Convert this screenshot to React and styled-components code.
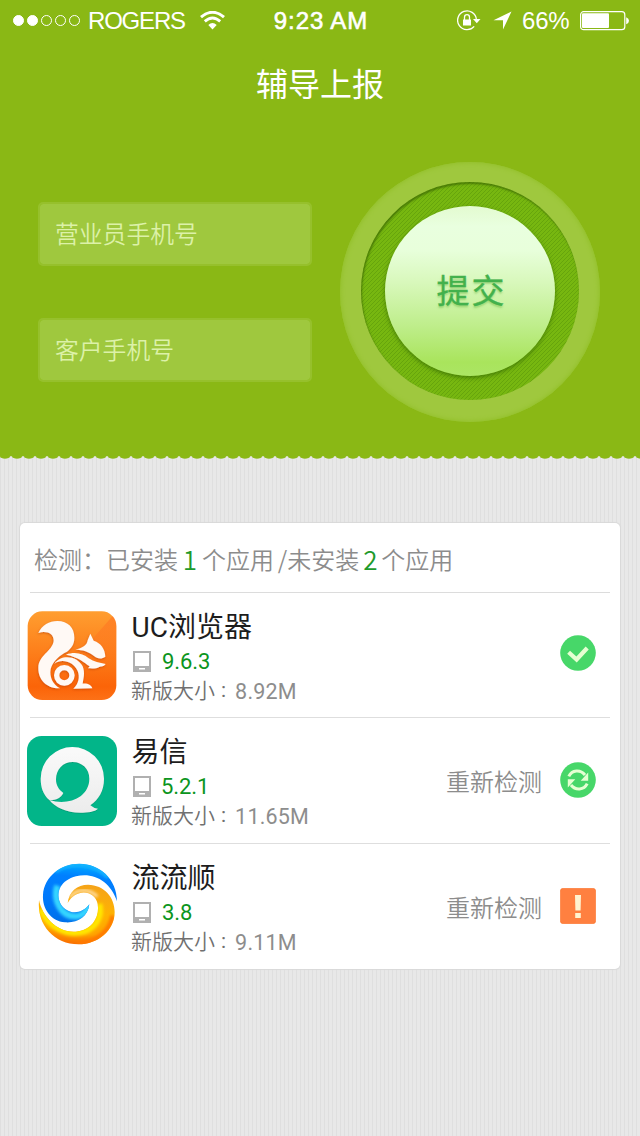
import React from "react";
import styled, { createGlobalStyle, css } from "styled-components";

const GlobalStyle = createGlobalStyle`
  * { box-sizing: border-box; }
  body {
    margin: 0;
    background: #e7e7e7 repeating-linear-gradient(90deg, #dfdfdf 0 1px, #e8e8e8 1px 4px);
    font-family: "Noto Sans CJK SC", sans-serif;
  }
`;

const Screen = styled.div`
  width: 640px;
  height: 1136px;
  overflow: hidden;
  display: flex;
  flex-direction: column;
`;

const Header = styled.header`
  height: 456px;
  flex: none;
  background: #8ab815;
`;

const StatusBar = styled.div`
  display: grid;
  grid-template-columns: 1fr auto 1fr;
  align-items: center;
  height: 40px;
  padding: 0 11px 0 13px;
  color: #fff;
  font: 24px/40px "Liberation Sans", sans-serif;
`;

const StatusGroup = styled.div`
  display: flex;
  align-items: center;
  height: 40px;
  justify-content: ${(p) => (p.$end ? "flex-end" : "flex-start")};
`;

const SignalDots = styled.div`
  display: flex;
  gap: 3px;
  margin-right: 8px;
`;

const Dot = styled.span`
  width: 11px;
  height: 11px;
  border-radius: 50%;
  border: 1px solid #fff;
  background: ${(p) => (p.$on ? "#fff" : "transparent")};
`;

const Carrier = styled.span`
  width: 112px;
  letter-spacing: -1.2px;
`;

const Clock = styled.span`
  padding-top: 1px;
  letter-spacing: 0.9px;
  -webkit-text-stroke: 0.6px #fff;
`;

const Percent = styled.span`
  margin: 0 10px 0 10px;
  padding-top: 1px;
  width: 48px;
  letter-spacing: -0.2px;
  white-space: nowrap;
`;

const Title = styled.h1`
  margin: 18px 0 0;
  height: 50px;
  font-size: 32px;
  font-weight: 400;
  line-height: 48px;
  text-align: center;
  color: #fff;
`;

const Form = styled.form`
  display: flex;
  justify-content: space-between;
  padding: 54px 40px 0 38px;
`;

const Fields = styled.div`
  display: flex;
  flex-direction: column;
  gap: 52px;
  padding-top: 40px;
`;

const Field = styled.input`
  width: 274px;
  height: 64px;
  padding: 0 15px 4px;
  border: 2px solid #96c02c;
  border-radius: 5px;
  outline: none;
  background: #9fc83e;
  background-clip: padding-box;
  font: 350 23.8px "Noto Sans CJK SC", sans-serif;
  color: #e0f3b0;
  &::placeholder { color: #dcf1a8; opacity: 1; }
`;

const Halo = styled.div`
  display: flex;
  justify-content: center;
  align-items: center;
  width: 260px;
  height: 260px;
  padding-bottom: 2px;
  border-radius: 50%;
  background: #9fc83e;
  box-shadow: inset 0 0 4px 1px #93c02a;
`;

const Groove = styled.div`
  display: flex;
  justify-content: center;
  align-items: center;
  width: 218px;
  height: 218px;
  border-radius: 50%;
  background: repeating-linear-gradient(135deg, #66a50c 0 1px, #77b710 1px 2.83px);
  box-shadow: inset 1px 2px 2px rgba(50, 90, 0, 0.6);
`;

const Submit = styled.button`
  width: 170px;
  height: 170px;
  padding: 0 0 5px 3px;
  border: 0;
  border-radius: 50%;
  background: linear-gradient(#e3fbd0 0%, #e9ffdf 12%, #e8ffdb 26%, #d8f8bb 45%, #bfee8c 70%, #a9e45c 92%, #abe564 100%);
  box-shadow: 0 2px 4px rgba(40, 90, 0, 0.6);
  font: 400 33px "Noto Sans CJK SC", sans-serif;
  letter-spacing: 2px;
  color: #43b14c;
  -webkit-text-stroke: 0.3px #43b14c;
  text-shadow: 0 2px 2px rgba(110, 190, 70, 0.5);
`;

const Scallop = styled.div`
  flex: none;
  height: 3px;
  background: radial-gradient(ellipse 6px 3px at 50% 0, #8ab815 75%, transparent 100%) -1px 0 / 12px 3px repeat-x;
`;

const Card = styled.main`
  margin: 64px 20px 0;
  height: 446px;
  padding: 0 10px;
  border-radius: 5px;
  background: #fff;
  box-shadow: 0 0 1px 1px #d9d9d9;
`;

const rule = css`
  border-bottom: 1px solid #dcdcdc;
`;

const Summary = styled.div`
  display: flex;
  height: 70px;
  padding: 0 0 0 4px;
  ${rule}
  font-weight: 350;
  font-size: 24px;
  line-height: 71px;
  word-spacing: -1.5px;
  color: #8c8c8c;
  white-space: pre;
`;

const Count = styled.span`
  width: ${(p) => p.$w}px;
  text-align: center;
  font-size: 26px;
  color: #1e9a2c;
`;

const AppRow = styled.section`
  display: flex;
  align-items: flex-start;
  height: 125.4px;
  margin-left: -3px;
  padding-right: 14px;
  background: linear-gradient(#dedede, #dedede) 3px 100% / 100% ${(p) => (p.$last ? 0 : 1)}px no-repeat;
`;

const Logo = styled.svg`
  flex: none;
  width: 90px;
  height: 90px;
  margin-top: 18px;
`;

const Details = styled.div`
  flex: 1;
  padding: 14px 0 0 14px;
`;

const Name = styled.h2`
  margin: 0 0 0 0.5px;
  height: 41px;
  font-family: Roboto, "Noto Sans CJK SC", sans-serif;
  font-size: 28px;
  font-weight: 400;
  line-height: 42px;
  color: #1d1d1d;
`;

const Version = styled.div`
  display: flex;
  align-items: center;
  gap: ${(p) => p.$gap}px;
  height: 27px;
  padding-left: 2px;
  font: 22px/27px Roboto, sans-serif;
  letter-spacing: -0.1px;
  color: #0b9520;
`;

const Size = styled.div`
  display: flex;
  height: 32px;
  font-size: 21px;
  font-weight: 350;
  line-height: 29px;
  color: #707070;
  white-space: pre;
`;

const SizeValue = styled.span`
  margin-left: 9px;
  padding-top: 2px;
  font-family: Roboto, sans-serif;
  font-size: 21.5px;
  font-weight: 400;
  letter-spacing: 0.2px;
  color: #8d8d8d;
`;

const Colon = styled.span`
  margin-left: 6px;
  padding-top: 1px;
  font-family: Roboto, sans-serif;
  font-weight: 400;
`;

const Action = styled.div`
  display: flex;
  align-items: center;
  gap: 18px;
  height: ${(p) => p.$h}px;
  font-size: 24px;
  font-weight: 350;
  color: #8c8c8c;
`;

const ActionLabel = styled.span`
  padding-top: 2px;
  line-height: 36px;
`;

const StatusIcon = styled.svg`
  width: 36px;
  height: 36px;
`;

const Wifi = () => (
  <svg width="25" height="19" viewBox="0 0 25 19" fill="none" stroke="#fff">
    <path d="M1 6.2Q12.5-3.6 24 6.2" strokeWidth="3" />
    <path d="M4.8 10.4Q12.5 3.6 20.2 10.4" strokeWidth="2.8" />
    <path d="M8.3 14Q12.5 10.2 16.7 14L12.5 18.5z" fill="#fff" stroke="none" />
  </svg>
);

const RotationLock = () => (
  <svg width="24" height="21" viewBox="0 0 24 21" fill="none" stroke="#fff">
    <path d="M17.2 16.4A9.4 9.4 0 1 1 19.4 9.5" strokeWidth="1.3" />
    <path d="M16 9h7.5l-3.7 4.2z" fill="#fff" stroke="none" />
    <path d="M6 9.5h8v6H6z" fill="#fff" stroke="none" />
    <path d="M7.5 10V7.2a2.5 2.5 0 0 1 5 0V10" strokeWidth="1.3" />
  </svg>
);

const Arrow = styled.svg`
  margin-left: 12px;
`;

const Battery = () => (
  <svg width="49" height="20" viewBox="0 0 49 20">
    <rect x=".6" y=".7" width="44.2" height="18" rx="3" fill="none" stroke="#fff" strokeWidth="1.2" />
    <rect x="2" y="2.3" width="27" height="14.8" rx="1" fill="#fff" />
    <path d="M46.2 6.2q2.8 1 2.8 3.5t-2.8 3.5z" fill="#fff" />
  </svg>
);

const Device = () => (
  <svg width="18" height="21" viewBox="0 0 18 21">
    <path d="M0 0h18v21H0z" fill="#b0b0b0" />
    <path d="M2 2h14v13H2zM6 17h6v1.5H6z" fill="#fff" />
  </svg>
);

const SquirrelLogo = () => (
  <Logo viewBox="21 18 270 270">
    <defs>
      <linearGradient id="uc" x1="0" y1="0" x2="0" y2="1">
        <stop offset="0" stopColor="#ff9e30" />
        <stop offset=".85" stopColor="#fb6408" />
        <stop offset="1" stopColor="#fd7117" />
      </linearGradient>
      <linearGradient id="ucFold" x1="0" y1="0" x2="0" y2="1">
        <stop offset="0" stopColor="#ff6a20" stopOpacity=".5" />
        <stop offset="1" stopColor="#ff6a20" stopOpacity="0" />
      </linearGradient>
      <filter id="soft" x="-10%" y="-10%" width="120%" height="120%">
        <feDropShadow dx="-1" dy="3" stdDeviation="2.5" floodColor="#b83c00" floodOpacity=".6" />
      </filter>
    </defs>
    <rect x="23" y="19" width="266" height="266" rx="44" fill="url(#uc)" />
    <path d="M289 63V190H140L278 33Q289 45 289 63z" fill="url(#ucFold)" />
    <g fill="#fff9f5" filter="url(#soft)">
      <path d="M55 84C66 60 88 48 112 48C144 48 163 68 163 98C163 118 154 130 141 140C120 150 98 168 92 192C88 216 98 238 120 250C84 252 54 226 55 188C56 150 96 140 101 108C102 86 80 76 55 84z" />
      <path d="M166 134C187 130 201 121 203 106L211 86 221 107C243 114 255 132 256 155C243 164 231 160 222 153C206 140 188 134 166 134z" />
      <path d="M138 149C166 139 189 146 206 160C222 170 238 174 257 177C252 185 243 184 238 186C230 191 218 191 204 190L209 184C192 172 176 157 138 149z" />
      <path d="M103 176C126 146 172 154 188 184C196 204 190 222 188 236C202 234 214 240 217 250L160 251C176 236 180 216 173 198C160 168 124 160 103 176z" />
      <path fillRule="evenodd" d="M133 180a31 31 0 0 1 0 62a31 31 0 0 1 0-62zM133 196a15 15 0 0 0 0 30a15 15 0 0 0 0-30z" />
    </g>
  </Logo>
);

const SpeechLogo = () => (
  <Logo viewBox="0 0 270 270">
    <defs>
      <linearGradient id="yx" x1="0" y1="0" x2="0" y2="1">
        <stop offset="0" stopColor="#fafafa" />
        <stop offset="1" stopColor="#ececec" />
      </linearGradient>
      <filter id="lift" x="-10%" y="-10%" width="120%" height="120%">
        <feDropShadow dx="0" dy="2" stdDeviation="1.5" floodColor="#006e50" floodOpacity=".4" />
      </filter>
    </defs>
    <rect width="270" height="270" rx="44" fill="#02b589" />
    <path d="M67 192C48 175 41 153 41 128A95 95 0 0 1 231 128C231 165 215 190 190 208Q200 217 213 218C204 227 181 230 160 230C117 230 85 214 67 192C124 210 187 184 187 128C187 98 165 78 137 78C108 78 87 100 87 130C87 148 95 161 109 171C101 188 84 193 67 192z" fill="url(#yx)" filter="url(#lift)" />
  </Logo>
);

const blueSwirl =
  "M291 152C272 93 221 64 168 77C123 89 108 122 119 153C130 184 177 202 208 161C204 199 171 218 135 215C92 211 66 173 69 132C73 78 122 39 178 39C238 39 291 84 291 152z";
const goldSwirl =
  "M57 148C68 205 126 261 190 238C221 227 239 194 233 160C224 118 169 112 143 157C147 122 172 102 204 102C253 103 284 140 284 184C284 239 235 281 175 281C105 281 50 225 57 148z";

const SwirlLogo = () => (
  <Logo viewBox="21 34 270 270">
    <defs>
      <linearGradient id="blue" x1=".3" y1="0" x2=".2" y2="1">
        <stop offset="0" stopColor="#00a8ff" />
        <stop offset=".2" stopColor="#0080ff" />
        <stop offset=".6" stopColor="#0078fb" />
        <stop offset="1" stopColor="#0070ea" />
      </linearGradient>
      <linearGradient id="gold" x1=".7" y1="0" x2=".5" y2="1">
        <stop offset="0" stopColor="#f5a31a" />
        <stop offset=".45" stopColor="#ffb400" />
        <stop offset=".8" stopColor="#ffa400" />
        <stop offset="1" stopColor="#fa7000" />
      </linearGradient>
      <clipPath id="blueClip"><path d={blueSwirl} /></clipPath>
      <clipPath id="goldClip"><path d={goldSwirl} /></clipPath>
      <filter id="glow" x="-20%" y="-20%" width="140%" height="140%">
        <feGaussianBlur stdDeviation="5" />
      </filter>
    </defs>
    <path d={blueSwirl} fill="url(#blue)" />
    <g clipPath="url(#blueClip)">
      <path d="M112 105C98 150 125 200 170 197C190 194 202 180 208 161" fill="none" stroke="#35d6ff" strokeWidth="19" filter="url(#glow)" />
      <path d="M105 62C150 30 225 38 265 80" fill="none" stroke="#12b4ff" strokeWidth="12" filter="url(#glow)" />
    </g>
    <path d={goldSwirl} fill="url(#gold)" />
    <g clipPath="url(#goldClip)">
      <path d="M62 175C85 230 140 258 195 242C232 228 246 195 238 160" fill="none" stroke="#ffe600" strokeWidth="18" filter="url(#glow)" />
      <path d="M150 140C168 115 205 112 232 138" fill="none" stroke="#ffe0a8" strokeWidth="9" filter="url(#glow)" />
      <path d="M278 195C272 240 232 274 175 278" fill="none" stroke="#ff7800" strokeWidth="14" filter="url(#glow)" />
    </g>
  </Logo>
);

const CheckIcon = () => (
  <StatusIcon viewBox="0 0 36 36">
    <circle cx="18" cy="18" r="17.8" fill="#47d769" />
    <path d="M8.6 17.2l8 7.3L27.2 13" fill="none" stroke="#e5ffd2" strokeWidth="4.2" />
  </StatusIcon>
);

const RefreshIcon = () => (
  <StatusIcon viewBox="0 0 36 36">
    <circle cx="18" cy="18" r="17.8" fill="#47d769" />
    <g fill="none" stroke="#e5ffd2" strokeWidth="3">
      <path d="M8.8 14.4C12 7.8 20.4 7.2 25 13" />
      <path d="M27.2 21.6C24 28.2 15.6 28.8 11 23" />
    </g>
    <path d="M28.2 10.5v8.2h-7.5zM7.8 25.5v-8.2h7.5z" fill="#e5ffd2" />
  </StatusIcon>
);

const AlertIcon = () => (
  <StatusIcon viewBox="0 0 36 36">
    <rect x=".3" y=".3" width="35.4" height="35.4" rx="3" fill="#ff8040" stroke="#fa762f" strokeWidth=".6" />
    <path d="M15 7h6l-.4 15.5h-5.2zM15.2 25h5.6v5h-5.6z" fill="#fff3d0" />
  </StatusIcon>
);

const apps = [
  { name: "UC浏览器", version: "9.6.3", gap: 11, size: "8.92M", actionHeight: 120, Art: SquirrelLogo, Icon: CheckIcon },
  { name: "易信", version: "5.2.1", gap: 10, size: "11.65M", actionHeight: 123, Art: SpeechLogo, Icon: RefreshIcon, label: "重新检测" },
  { name: "流流顺", version: "3.8", gap: 11, size: "9.11M", actionHeight: 124, Art: SwirlLogo, Icon: AlertIcon, label: "重新检测" },
];

export default function App() {
  return (
    <Screen>
      <GlobalStyle />
      <Header>
        <StatusBar>
          <StatusGroup>
            <SignalDots>
              {[1, 1, 0, 0, 0].map((on, i) => <Dot key={i} $on={on} />)}
            </SignalDots>
            <Carrier>ROGERS</Carrier>
            <Wifi />
          </StatusGroup>
          <Clock>9:23 AM</Clock>
          <StatusGroup $end>
            <RotationLock />
            <Arrow width="19" height="19" viewBox="0 0 19 19">
              <path d="M18.5.5L10 18.5V9.2H.5z" fill="#fff" />
            </Arrow>
            <Percent>66%</Percent>
            <Battery />
          </StatusGroup>
        </StatusBar>
        <Title>辅导上报</Title>
        <Form onSubmit={(e) => e.preventDefault()}>
          <Fields>
            <Field placeholder="营业员手机号" />
            <Field placeholder="客户手机号" />
          </Fields>
          <Halo>
            <Groove>
              <Submit>提交</Submit>
            </Groove>
          </Halo>
        </Form>
      </Header>
      <Scallop />
      <Card>
        <Summary>
          检测：已安装<Count $w={24}>1</Count>个应用 /未安装<Count $w={22}>2</Count>个应用
        </Summary>
        {apps.map(({ name, version, gap, size, actionHeight, Art, Icon, label }, i) => (
          <AppRow key={name} $last={i === apps.length - 1}>
            <Art />
            <Details>
              <Name>{name}</Name>
              <Version $gap={gap}><Device />{version}</Version>
              <Size>新版大小<Colon>:</Colon><SizeValue>{size}</SizeValue></Size>
            </Details>
            <Action $h={actionHeight}>
              {label && <ActionLabel>{label}</ActionLabel>}
              <Icon />
            </Action>
          </AppRow>
        ))}
      </Card>
    </Screen>
  );
}
